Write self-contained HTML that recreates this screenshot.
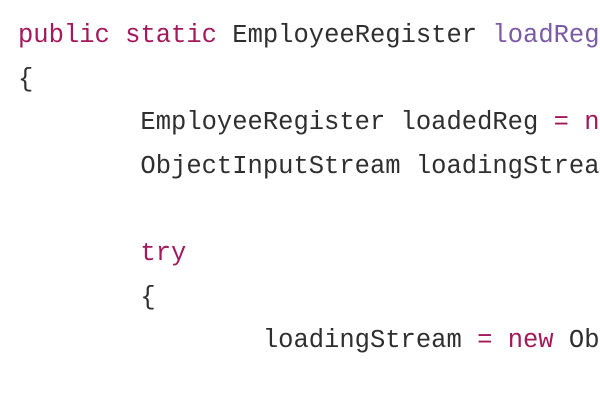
<!DOCTYPE html>
<html><head><meta charset="utf-8"><style>
html,body{margin:0;padding:0;background:#fff;width:600px;height:400px;overflow:hidden}
pre{margin:0;position:absolute;left:18px;top:14px;font-family:"Liberation Mono",monospace;font-size:25.5px;line-height:43.6px;color:#2f2f2f;white-space:pre}
.k{color:#a3195b}.m{color:#7b5aa6}
</style></head><body>
<pre><span class="k">public</span> <span class="k">static</span> EmployeeRegister <span class="m">loadReg</span>
{
        EmployeeRegister loadedReg <span class="k">=</span> <span class="k">n</span>
        ObjectInputStream loadingStrea

        <span class="k">try</span>
        {
                loadingStream <span class="k">=</span> <span class="k">new</span> Ob</pre>
</body></html>
